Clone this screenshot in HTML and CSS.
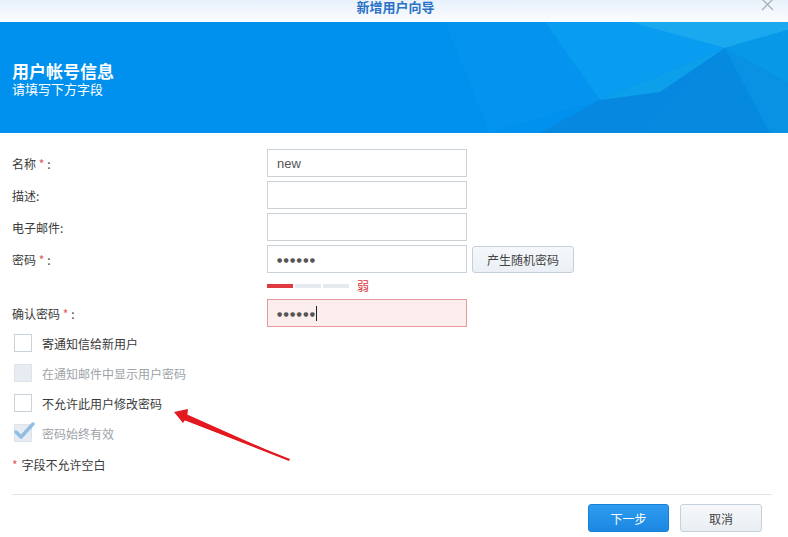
FILE: index.html
```html
<!DOCTYPE html>
<html lang="zh-CN">
<head>
<meta charset="utf-8">
<title>新增用户向导</title>
<link rel="stylesheet" href="styles.css">
</head>
<body>
<div class="window">
  <div class="titlebar">
    <span class="title">新增用户向导</span>
    <svg class="close" width="14" height="12" viewBox="0 0 14 12"><path d="M1 -1 L12 10 M12 -1 L1 10" stroke="#a8b0b8" stroke-width="1.3" fill="none"/></svg>
  </div>
  <div class="banner">
    <svg class="facets" width="788" height="111" viewBox="0 0 788 111" preserveAspectRatio="none">
      <polygon points="445,0 545,0 600,78 490,111" fill="#0896ee" opacity="0.5"/>
      <polygon points="545,0 630,0 725,26 600,78" fill="#0aa0f0" opacity="0.8"/>
      <polygon points="630,0 788,0 788,8 725,26" fill="#1aa8ef"/>
      <polygon points="600,78 725,26 640,111 540,111" fill="#0788e0"/>
      <polygon points="600,78 725,26 660,70" fill="#10b0f2" opacity="0.6"/>
      <polygon points="725,26 770,111 640,111" fill="#058ae0"/>
      <polygon points="725,26 788,8 788,111 770,111" fill="#0898e8"/>
      <polygon points="725,26 788,60 788,111 770,111" fill="#0a8de0" opacity="0.6"/>
    </svg>
    <div class="banner-text">
      <div class="banner-title">用户帐号信息</div>
      <div class="banner-sub">请填写下方字段</div>
    </div>
  </div>
  <div class="form">
    <div class="row">
      <label class="label">名称 <span class="req">*</span>:</label>
      <div class="input"><span class="value">new</span></div>
    </div>
    <div class="row">
      <label class="label">描述:</label>
      <div class="input"></div>
    </div>
    <div class="row">
      <label class="label">电子邮件:</label>
      <div class="input"></div>
    </div>
    <div class="row row-tight">
      <label class="label">密码 <span class="req">*</span>:</label>
      <div class="input"><span class="dots">●●●●●●</span></div>
      <button class="btn btn-gen">产生随机密码</button>
    </div>
    <div class="strength">
      <span class="seg seg-on"></span>
      <span class="seg"></span>
      <span class="seg"></span>
      <span class="weak">弱</span>
    </div>
    <div class="row">
      <label class="label">确认密码 <span class="req">*</span>:</label>
      <div class="input input-error"><span class="dots">●●●●●●</span><span class="caret"></span></div>
    </div>
    <div class="checks">
      <div class="check"><span class="box"></span><span>寄通知信给新用户</span></div>
      <div class="check disabled"><span class="box"></span><span>在通知邮件中显示用户密码</span></div>
      <div class="check"><span class="box"></span><span>不允许此用户修改密码</span></div>
      <div class="check disabled"><span class="box"><svg class="tick" width="21" height="19" viewBox="0 0 21 19"><path d="M2 10 L7 15 L19 2" stroke="#8fbde3" stroke-width="3.4" fill="none" stroke-linecap="round" stroke-linejoin="round"/></svg></span><span>密码始终有效</span></div>
    </div>
    <div class="note"><span class="req">*</span> 字段不允许空白</div>
  </div>
  <div class="footer">
    <button class="btn btn-primary">下一步</button>
    <button class="btn btn-cancel">取消</button>
  </div>
  <svg class="arrow" width="788" height="537" viewBox="0 0 788 537">
    <polygon points="289,461 290,459 187,418 188,409 174,412 183,423 185,420" fill="#e3191f"/>
    <polygon points="289,460 186,414 184,420" fill="#e3191f"/>
  </svg>
</div>
</body>
</html>
```

FILE: styles.css
```css
* { box-sizing: border-box; }
html, body { margin: 0; padding: 0; }
body {
  width: 788px;
  height: 537px;
  overflow: hidden;
  background: #ffffff;
  font-family: "Noto Sans CJK SC", "Liberation Sans", sans-serif;
  font-size: 12px;
  color: #3a3a3a;
}
.window {
  position: relative;
  width: 788px;
  height: 537px;
  display: flex;
  flex-direction: column;
}
.titlebar {
  height: 22px;
  background: linear-gradient(#e8f1fb, #fbfdff);
  display: flex;
  justify-content: center;
  position: relative;
}
.title {
  font-size: 13px;
  font-weight: 700;
  color: #2a72c6;
  line-height: 13px;
  margin-top: 0;
  margin-left: 3px;
}
.close {
  position: absolute;
  right: 13px;
  top: 0;
}
.banner {
  position: relative;
  height: 111px;
  background: #0090ee;
  overflow: hidden;
}
.facets {
  position: absolute;
  left: 0;
  top: 0;
}
.banner-text {
  position: relative;
  padding: 39px 0 0 12px;
  color: #ffffff;
}
.banner-title {
  font-size: 17px;
  font-weight: 700;
  line-height: 19px;
}
.banner-sub {
  font-size: 13px;
  line-height: 16px;
  margin-top: 1px;
}
.form {
  padding: 16px 0 0 12px;
  display: flex;
  flex-direction: column;
}
.row {
  display: flex;
  align-items: center;
  height: 28px;
  margin-bottom: 4px;
}
.row-tight { margin-bottom: 0; }
.label {
  width: 255px;
  flex: none;
  color: #3a3a3a;
}
.req { color: #e05a5a; }
.label .req { margin-right: 3px; }
.input {
  width: 200px;
  height: 28px;
  border: 1px solid #c9d1d9;
  background: #fff;
  display: flex;
  align-items: center;
  padding-left: 9px;
}
.value {
  font-family: "Liberation Sans", sans-serif;
  font-size: 13px;
  color: #555;
}
.dots {
  font-family: "DejaVu Sans", sans-serif;
  font-size: 6px;
  letter-spacing: 1.3px;
  color: #555;
}
.caret {
  display: inline-block;
  width: 1px;
  height: 15px;
  background: #222;
}
.input-error {
  background: #fdeeee;
  border-color: #e59a9c;
}
.btn {
  font-family: "Noto Sans CJK SC", sans-serif;
  font-size: 12px;
  height: 27px;
  border-radius: 3px;
  padding: 0;
  cursor: pointer;
}
.btn-gen {
  margin-left: 5px;
  width: 102px;
  background: linear-gradient(#f5f8fb, #eaf0f5);
  border: 1px solid #c6d0da;
  color: #444;
}
.strength {
  height: 26px;
  margin-left: 255px;
  display: flex;
  align-items: center;
}
.seg {
  width: 26px;
  height: 4px;
  background: #e4eaf0;
  margin-right: 2px;
}
.seg-on { background: #e0393e; }
.weak {
  color: #d9363c;
  margin-left: 6px;
  line-height: 12px;
}
.checks {
  margin-top: -3px;
  display: flex;
  flex-direction: column;
}
.check {
  height: 30px;
  display: flex;
  align-items: center;
  padding-left: 2px;
  color: #3a3a3a;
}
.box {
  position: relative;
  width: 18px;
  height: 18px;
  border: 1px solid #c9d1d9;
  background: #fff;
  margin-right: 10px;
  flex: none;
}
.check.disabled { color: #9ea3a8; }
.check.disabled .box {
  background: #e6ecf2;
  border-color: #dde3e9;
}
.tick {
  position: absolute;
  left: -1px;
  top: -3px;
}
.note {
  height: 30px;
  display: flex;
  align-items: center;
  gap: 4px;
  margin-top: 1px;
}
.footer {
  margin: 15px 16px 0 12px;
  border-top: 1px solid #e1e5e9;
  padding-top: 9px;
  display: flex;
  justify-content: flex-end;
  gap: 11px;
  padding-right: 10px;
}
.btn-primary {
  width: 81px;
  height: 28px;
  background: linear-gradient(#2f9cf0, #1b87e2);
  border: 1px solid #1a7fd6;
  color: #fff;
}
.btn-cancel {
  width: 82px;
  height: 28px;
  background: linear-gradient(#f6f8fa, #e9eef3);
  border: 1px solid #c6d0da;
  color: #444;
}
.arrow {
  position: absolute;
  left: 0;
  top: 0;
  pointer-events: none;
}
```
